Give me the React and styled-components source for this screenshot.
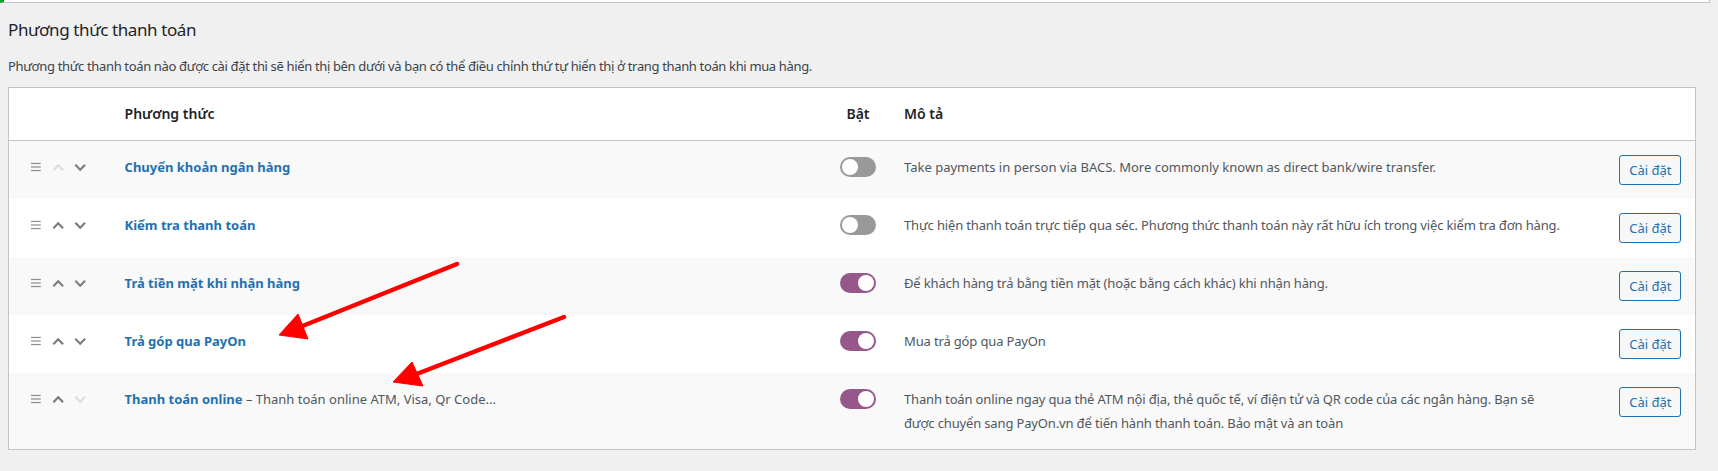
import React from "react";
import styled, { createGlobalStyle } from "styled-components";

const GlobalStyle = createGlobalStyle`
  body {
    margin: 0;
    background: #f0f0f1;
    font-family: "Noto Sans", "Segoe UI", sans-serif;
    font-size: 13px;
    color: #3c434a;
  }
`;

const Page = styled.div`
  position: relative;
  width: 1718px;
  height: 471px;
  overflow: hidden;
`;

const Notice = styled.div`
  width: 1705px;
  height: 2px;
  background: #fff;
  border: 1px solid #c3c4c7;
  border-top: none;
  border-left: 4px solid #00a32a;
`;

const Content = styled.div`
  padding-left: 8px;
`;

const Title = styled.h2`
  margin: 16px 0 0;
  font-size: 17px;
  font-weight: 400;
  line-height: 22px;
  letter-spacing: -0.4px;
  color: #1d2327;
`;

const Intro = styled.p`
  margin: 15px 0 0;
  line-height: 20px;
  letter-spacing: -0.35px;
  color: #3c434a;
`;

const Table = styled.table`
  margin-top: 11px;
  width: 1688px;
  table-layout: fixed;
  border-collapse: collapse;
  border: 1px solid #c3c4c7;
  background: #fff;
`;

const Th = styled.th`
  padding: 14px;
  line-height: 24px;
  font-size: 14px;
  font-weight: 600;
  color: #1d2327;
  text-align: ${(p) => p.$align || "left"};
  border-bottom: 1px solid #c3c4c7;
`;

const Tr = styled.tr`
  background: ${(p) => (p.$striped ? "#f9f9f9" : "#fff")};
`;

const Td = styled.td`
  padding: 14px;
  padding-left: ${(p) => p.$padLeft || "14px"};
  line-height: 24px;
  vertical-align: top;
  text-align: ${(p) => p.$align || "left"};
`;

const SortTools = styled.div`
  display: flex;
  align-items: center;
  height: 24px;
`;

const Handle = styled.svg`
  width: 11px;
  height: 10px;
  margin-right: 11px;
`;

const Chevron = styled.svg`
  width: 14px;
  height: 9px;
  margin-right: 10px;
  color: ${(p) => (p.$disabled ? "#dcdcde" : "#787c82")};
`;

const Name = styled.a`
  color: #2271b1;
  font-weight: 700;
  text-decoration: none;
`;

const Extra = styled.span`
  color: #50575e;
`;

const Toggle = styled.span`
  display: inline-block;
  position: relative;
  vertical-align: top;
  margin-top: 2px;
  width: 36px;
  height: 20px;
  border-radius: 10px;
  background: ${(p) => (p.$on ? "#96588a" : "#999")};

  &::after {
    content: "";
    position: absolute;
    top: 2px;
    left: ${(p) => (p.$on ? "18px" : "2px")};
    width: 16px;
    height: 16px;
    border-radius: 50%;
    background: #fff;
  }
`;

const Desc = styled.div`
  color: #50575e;
  white-space: pre-line;
  letter-spacing: ${(p) => (p.$latin ? "0" : "-0.15px")};
`;

const SetupButton = styled.button`
  width: 62px;
  height: 30px;
  padding: 0;
  border: 1px solid #2271b1;
  border-radius: 3px;
  background: #f6f7f7;
  color: #2271b1;
  font-family: inherit;
  font-size: 13px;
  line-height: 28px;
  white-space: nowrap;
  vertical-align: top;
`;

const Annotations = styled.svg`
  position: absolute;
  top: 0;
  left: 0;
  pointer-events: none;
`;

const methods = [
  {
    name: "Chuyển khoản ngân hàng",
    on: false,
    desc: "Take payments in person via BACS. More commonly known as direct bank/wire transfer.",
    latin: true,
    first: true,
  },
  {
    name: "Kiểm tra thanh toán",
    on: false,
    desc: "Thực hiện thanh toán trực tiếp qua séc. Phương thức thanh toán này rất hữu ích trong việc kiểm tra đơn hàng.",
  },
  {
    name: "Trả tiền mặt khi nhận hàng",
    on: true,
    desc: "Để khách hàng trả bằng tiền mặt (hoặc bằng cách khác) khi nhận hàng.",
  },
  {
    name: "Trả góp qua PayOn",
    on: true,
    desc: "Mua trả góp qua PayOn",
  },
  {
    name: "Thanh toán online",
    extra: " – Thanh toán online ATM, Visa, Qr Code...",
    on: true,
    desc: "Thanh toán online ngay qua thẻ ATM nội địa, thẻ quốc tế, ví điện tử và QR code của các ngân hàng. Bạn sẽ\nđược chuyển sang PayOn.vn để tiến hành thanh toán. Bảo mật và an toàn",
    last: true,
  },
];

const HandleIcon = () => (
  <Handle viewBox="0 0 11 10">
    <g stroke="#8c8f94" strokeWidth="1.4">
      <line x1="0" y1="1" x2="11" y2="1" />
      <line x1="0" y1="5" x2="11" y2="5" />
      <line x1="0" y1="9" x2="11" y2="9" />
    </g>
  </Handle>
);

const ChevronIcon = ({ up, disabled }) => (
  <Chevron viewBox="0 0 14 9" $disabled={disabled}>
    <polyline
      points={up ? "1.5,7.5 7,2 12.5,7.5" : "1.5,1.5 7,7 12.5,1.5"}
      fill="none"
      stroke="currentColor"
      strokeWidth="2.4"
    />
  </Chevron>
);

const Arrow = ({ from, to, tip, wing1, wing2 }) => (
  <g fill="#f00" stroke="#f00">
    <line x1={from[0]} y1={from[1]} x2={to[0]} y2={to[1]} strokeWidth="4.5" strokeLinecap="round" />
    <polygon points={`${tip} ${wing1} ${wing2}`} strokeWidth="1" strokeLinejoin="round" />
  </g>
);

export default function App() {
  return (
    <Page>
      <GlobalStyle />
      <Notice />
      <Content>
        <Title>Phương thức thanh toán</Title>
        <Intro>
          Phương thức thanh toán nào được cài đặt thì sẽ hiển thị bên dưới và bạn có thể điều chỉnh thứ tự hiển thị ở trang thanh toán khi mua hàng.
        </Intro>
        <Table>
          <colgroup>
            <col style={{ width: 102 }} />
            <col style={{ width: 715 }} />
            <col style={{ width: 64 }} />
            <col style={{ width: 715 }} />
            <col style={{ width: 90 }} />
          </colgroup>
          <thead>
            <tr>
              <Th />
              <Th>Phương thức</Th>
              <Th $align="center">Bật</Th>
              <Th>Mô tả</Th>
              <Th />
            </tr>
          </thead>
          <tbody>
            {methods.map((m, i) => (
              <Tr key={m.name} $striped={i % 2 === 0}>
                <Td $padLeft="22px">
                  <SortTools>
                    <HandleIcon />
                    <ChevronIcon up disabled={m.first} />
                    <ChevronIcon disabled={m.last} />
                  </SortTools>
                </Td>
                <Td>
                  <Name href="#">{m.name}</Name>
                  {m.extra && <Extra>{m.extra}</Extra>}
                </Td>
                <Td $align="center">
                  <Toggle $on={m.on} />
                </Td>
                <Td>
                  <Desc $latin={m.latin}>{m.desc}</Desc>
                </Td>
                <Td $align="right">
                  <SetupButton>Cài đặt</SetupButton>
                </Td>
              </Tr>
            ))}
          </tbody>
        </Table>
      </Content>
      <Annotations width="1718" height="471" viewBox="0 0 1718 471">
        <Arrow from={[457, 264]} to={[300, 327]} tip="279,335" wing1="298,314" wing2="308,339" />
        <Arrow from={[564, 317]} to={[414, 375]} tip="393,382" wing1="412,362" wing2="423,386" />
      </Annotations>
    </Page>
  );
}
